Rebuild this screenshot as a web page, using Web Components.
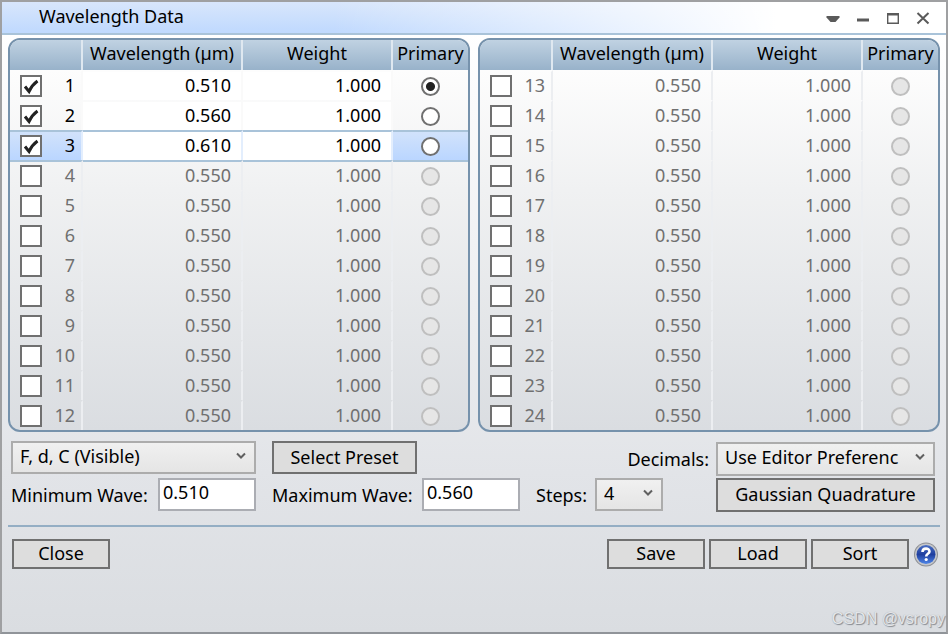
<!DOCTYPE html>
<html lang="en">
<head>
<meta charset="utf-8">
<title>Wavelength Data</title>
<style>
html, body { height: 100%; margin: 0; }
body { font: 18px/28px "Noto Sans", "Open Sans", sans-serif; color: #000; }
</style>
</head>
<body>
<app-window heading="Wavelength Data">
  <panel-pair>
    <wave-table start="1"></wave-table>
    <wave-table start="13"></wave-table>
  </panel-pair>
  <wave-options></wave-options>
  <action-bar></action-bar>
  <span slot="mark">CSDN @vsropy</span>
</app-window>

<script>
class ShadowElement extends HTMLElement {
  connectedCallback() {
    if (this.shadowRoot) return;
    this.attachShadow({ mode: 'open' }).innerHTML = this.render();
  }
}

customElements.define('app-window', class extends ShadowElement {
  render() {
    return `
    <style>
      :host { display: flex; flex-direction: column; box-sizing: border-box; min-height: 100%; position: relative;
        border: 2px solid #9fa0a2; border-bottom-color: #909499;
        background: linear-gradient(#fff 30px, #fbfbfc 90px, #e2e4e8 470px, #dadde1); }
      header { display: flex; align-items: center; height: 31px; padding: 0 8px 0 37px; border-bottom: 2px solid #a9c3d9;
        background: linear-gradient(90deg, transparent 35%, #fff 82%), linear-gradient(#d8e6fc, #bfd9fe); }
      h1 { flex: 1; margin: 0; padding-bottom: 4px; font-size: 18px; font-weight: 400; line-height: 26px; }
      nav { display: flex; }
      nav button { width: 30px; height: 28px; padding: 0; border: 0; background: none; display: grid; place-items: center; }
      svg { display: block; }
      main { flex: 1; padding: 3px 6px 0; }
      .mark { position: absolute; right: 1px; bottom: 2px; font: 16px/22px "Liberation Sans", sans-serif; color: #e4e6e9;
        text-shadow: 1px 1px 1px #858990, 0 0 1px #a4a8ad; }
    </style>
    <header><h1>${this.getAttribute('heading')}</h1>
      <nav>
        <button aria-label="Options"><svg width="16" height="16"><path d="M1.500 6h13v1.500L10.500 12h-5L1.500 7.500z" fill="#5a5a5a"/></svg></button>
        <button aria-label="Minimize"><svg width="16" height="16"><path d="M2 8.500h12v3H2z" fill="#5a5a5a"/></svg></button>
        <button aria-label="Maximize"><svg width="16" height="16"><path d="M2.700 4h10.600v9.300H2.700z" fill="none" stroke="#5a5a5a" stroke-width="1.400"/><path d="M2 3h12v2.500H2z" fill="#5a5a5a"/></svg></button>
        <button aria-label="Close window"><svg width="16" height="16"><path d="M2.500 3l11 10.500M13.500 3L2.500 13.500" stroke="#5a5a5a" stroke-width="2"/></svg></button>
      </nav>
    </header>
    <main><slot></slot></main>
    <div class="mark"><slot name="mark"></slot></div>`;
  }
});

customElements.define('panel-pair', class extends ShadowElement {
  render() {
    return `<style>:host { display: grid; grid-template-columns: 1fr 1fr; gap: 8px; }</style><slot></slot>`;
  }
});

customElements.define('wave-table', class extends ShadowElement {
  render() {
    const start = Number(this.getAttribute('start'));
    const live = { 1: '0.510', 2: '0.560', 3: '0.610' };
    const rows = Array.from({ length: 12 }, (_, i) => {
      const n = start + i, on = n in live;
      return `<tr class="${on ? 'on' : ''} ${n === 3 ? 'current' : ''}">
        <td><div class="pick"><input type="checkbox" id="c${n}" ${on ? 'checked' : ''}><label for="c${n}">${n}</label></div></td>
        <td class="num">${live[n] || '0.550'}</td><td class="num">1.000</td>
        <td><input type="radio" name="primary" aria-label="Primary ${n}" ${n === 1 ? 'checked' : ''} ${on ? '' : 'disabled'}></td></tr>`;
    }).join('');
    return `
    <style>
      :host { display: block; border: 2px solid #7692ac; border-radius: 12px; overflow: hidden;
        background: linear-gradient(#fdfdfd 30px, #f0f1f2 150px, #dadde1); }
      table { width: 100%; table-layout: fixed; border-collapse: separate; border-spacing: 0; }
      .c1 { width: 73px; } .c3 { width: 150px; } .c4 { width: 75px; }
      th, td { box-sizing: border-box; height: 30px; padding: 0; line-height: 26px; font-weight: 400; border-right: 2px solid #eceef1; }
      th { padding-bottom: 4px; border-right-color: #dfe8f0; white-space: nowrap; }
      th:last-child, td:last-child { border-right: 0; }
      thead tr { background: linear-gradient(#c0d2e2, #98b2ca); }
      td { border-top: 2px solid transparent; color: #707070; }
      .on td { color: #000; }
      .num { text-align: right; padding-right: 10px; background-clip: padding-box; padding-bottom: 2px; }
      .on .num { background-color: #fff; }
      .on td { border-right-color: #fafafa; }
      .current td { border-top-color: #a9c3d9; border-right-color: #e3eefd; }
      .current + tr td { border-top-color: #a9c3d9; }
      .current { background: linear-gradient(#d3e3fb, #bad6ff); }
      .pick { display: flex; align-items: center; justify-content: space-between; padding: 0 6px 0 10px; }
      label { margin-top: -2px; }
      input { appearance: none; box-sizing: border-box; margin: 0; display: block; }
      [type=checkbox] { width: 22px; height: 22px; border: 2px solid #707070; background: #fff; }
      [type=checkbox]:checked { background: #fff url("data:image/svg+xml,%3Csvg xmlns='http://www.w3.org/2000/svg' viewBox='0 0 18 18'%3E%3Cpath d='M3 9.500L7 14.500Q10 8 15.500 4' fill='none' stroke='%23222' stroke-width='3'/%3E%3C/svg%3E"); }
      [type=radio] { width: 19px; height: 19px; margin: 0 auto; border: 2px solid #707070; border-radius: 50%; background: #fff; }
      [type=radio]:checked { background: radial-gradient(circle, #222 4px, #fff 5px); }
      [type=radio]:disabled { border-color: #bfbfbf; background: #e6e6e6; }
    </style>
    <table><colgroup><col class="c1"><col><col class="c3"><col class="c4"></colgroup>
      <thead><tr><th></th><th>Wavelength (µm)</th><th>Weight</th><th>Primary</th></tr></thead>
      <tbody>${rows}</tbody></table>`;
  }
});

customElements.define('flat-button', class extends ShadowElement {
  render() {
    return `
    <style>
      :host { display: block; }
      button { display: block; box-sizing: border-box; width: 100%; height: 100%; min-height: 30px; margin: 0; padding: 0 2px 2px;
        border: 2px solid #707070; background: #ddd; color: #000; font: inherit; line-height: 24px; white-space: nowrap; }
    </style><button><slot></slot></button>`;
  }
});

customElements.define('drop-down', class extends ShadowElement {
  render() {
    return `
    <style>
      :host { display: grid; grid-template: 100% / 100%; }
      select, svg { grid-area: 1 / 1; }
      select { appearance: none; box-sizing: border-box; width: 100%; height: 100%; margin: 0; padding: 0 30px 4px 7px; border: 2px solid #acacac; border-radius: 0;
        background: linear-gradient(#f0f0f0, #e5e5e5); color: #000; font: inherit; line-height: 24px; }
      svg { justify-self: end; align-self: center; margin: 0 9px 4px 0; pointer-events: none; }
    </style>
    <select aria-label="${this.getAttribute('label')}"><option>${this.getAttribute('value')}</option></select>
    <svg width="12" height="8"><path d="M2 1.500l4 4 4-4" fill="none" stroke="#606060" stroke-width="2"/></svg>`;
  }
});

customElements.define('text-field', class extends ShadowElement {
  render() {
    return `
    <style>
      :host, label { display: flex; }
      label { flex: 1; justify-content: space-between; line-height: 34px; white-space: nowrap; }
      input { box-sizing: border-box; width: 98px; height: 33px; margin: 0; padding: 0 3px 6px; border: 2px solid #abadb3; background: #fff; color: #000; font: inherit; line-height: 23px; }
    </style>
    <label>${this.getAttribute('label')}<input value="${this.getAttribute('value')}"></label>`;
  }
});

customElements.define('wave-options', class extends ShadowElement {
  render() {
    return `
    <style>
      :host { display: flex; justify-content: space-between; padding: 9px 5px 13px 3px; border-bottom: 2px solid #94aec4; }
      .range { display: grid; grid-template-columns: 245px 248px auto; grid-auto-rows: 33px; gap: 4px 16px; }
      .range flat-button { width: 145px; }
      .range text-field { grid-row: 2; }
      .steps { grid-area: 2 / 3; display: flex; justify-content: space-between; gap: 6px; width: 127px; line-height: 34px; }
      .steps drop-down { width: 68px; }
      .format { display: flex; gap: 7px; margin-left: -40px; padding-top: 1px; line-height: 34px; }
      .stack { display: grid; grid-template-columns: 219px; grid-auto-rows: 34px; gap: 2px; }
    </style>
    <div class="range">
      <drop-down label="Preset" value="F, d, C (Visible)"></drop-down>
      <flat-button>Select Preset</flat-button>
      <text-field label="Minimum Wave:" value="0.510"></text-field>
      <text-field label="Maximum Wave:" value="0.560"></text-field>
      <div class="steps"><span>Steps:</span><drop-down label="Steps" value="4"></drop-down></div>
    </div>
    <div class="format">
      <span>Decimals:</span>
      <div class="stack">
        <drop-down label="Decimals" value="Use Editor Preferenc"></drop-down>
        <flat-button>Gaussian Quadrature</flat-button>
      </div>
    </div>`;
  }
});

customElements.define('action-bar', class extends ShadowElement {
  render() {
    return `
    <style>
      :host { display: flex; gap: 4px; padding: 12px 1px 0 4px; }
      flat-button { width: 98px; height: 30px; }
      .push { margin-left: auto; }
      .help { width: 26px; height: 30px; padding: 0; border: 0; background: none; }
      svg { display: block; }
    </style>
    <flat-button>Close</flat-button>
    <flat-button class="push">Save</flat-button><flat-button>Load</flat-button><flat-button>Sort</flat-button>
    <button class="help" aria-label="Help"><svg width="26" height="30" viewBox="0 0 26 30">
      <defs><linearGradient id="g" x2="0" y2="1"><stop stop-color="#4a6fc4"/><stop offset=".5" stop-color="#1f3f9f"/><stop offset="1" stop-color="#4f86e8"/></linearGradient></defs>
      <circle cx="13" cy="15.500" r="12" fill="#8d8f94"/><circle cx="13" cy="15.500" r="11" fill="#c4c6ca"/>
      <circle cx="13" cy="15.500" r="9.500" fill="url(#g)"/>
      <path d="M9.500 13c0-4.500 7-4.300 7-.6 0 2.400-3.300 2.400-3.300 5" fill="none" stroke="#fff" stroke-width="2.600"/><circle cx="13.200" cy="20.500" r="1.600" fill="#fff"/></svg></button>`;
  }
});
</script>
</body>
</html>
